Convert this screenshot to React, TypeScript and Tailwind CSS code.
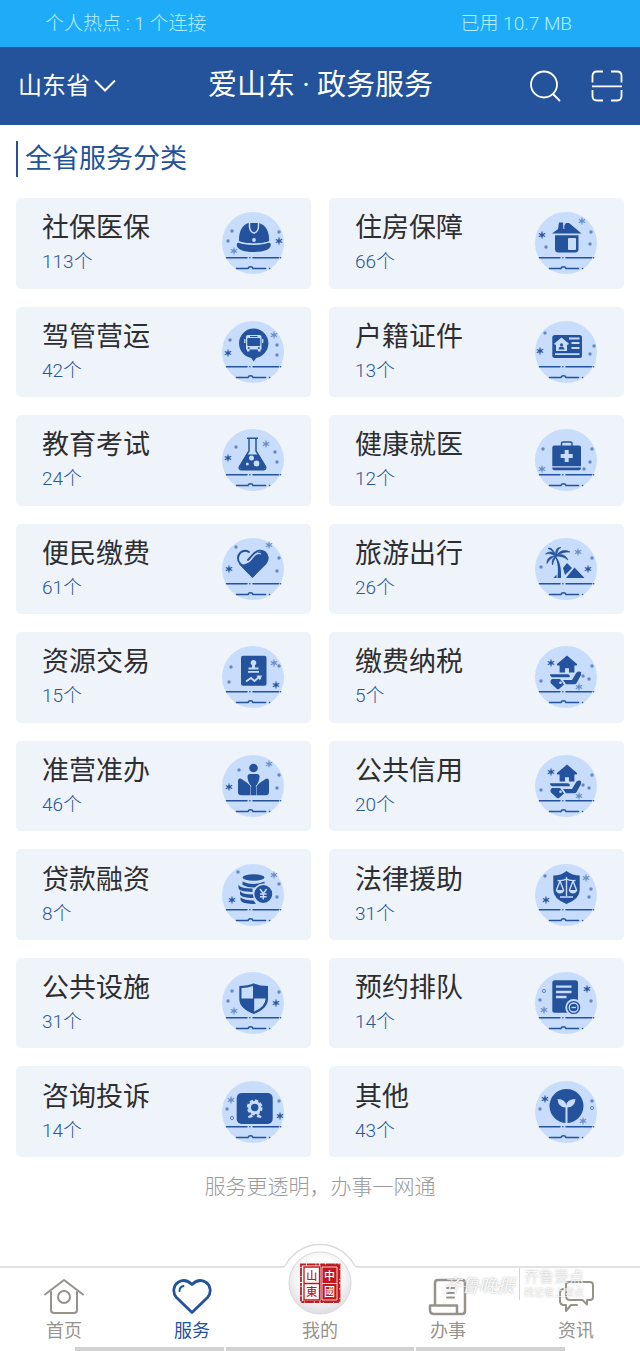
import React from "react";

const BLUE = "#24529c";
const PALE = "#c8ddfb";

// kind: s = dark star, l = light star, d = dot, o = ring
type Deco = [kind: "s" | "l" | "d" | "o", x: number, y: number];

type Service = {
  name: string;
  count: number;
  deco: Deco[];
  art: React.ReactNode;
};

const HandHouse = () => (
  <>
    <path d="M32 9.500 42 18q.6 1.600-1 1.600h-1.600v7H34v-4.400h-4v4.400h-5.400v-7H23q-1.600 0-1-1.600z" />
    <path d="M15 28.200h18q2.500 1 1.600 3H17q-2-.5-2-3z" />
    <path d="M17 33h8l4 5.500-5 4.500q-1 .6-2 0l-6-5.500q-1.500-2.500 1-4.500z" />
    <path d="M28 34h9l4.500-7.500q2.500-1.500 4.500-.5v3l-4.500 8.200q-.7 1-2 1H31z" />
    <circle cx="25.500" cy="36.800" r="1.300" fill={PALE} />
  </>
);

const services: Service[] = [
  {
    name: "社保医保",
    count: 113,
    deco: [["d", 10, 19], ["d", 6, 29], ["l", 12, 39], ["d", 57, 20], ["s", 57, 29]],
    art: (
      <>
        <path d="M17 29c-.5-10 4-17 10-18h10c7 2 10.500 9 10 18-5 3-25 3-30 0z" />
        <path d="M15 31.500c1-2 3 0 6 .6q11 2 21 0c3-.6 5-2.600 6.500-.6 1.500 5-4 8.500-16.500 8.500S13.500 36.500 15 31.500z" />
        <path d="M27.500 10.500v4c0 3 2 6.500 4.500 6.500s4.500-3.500 4.500-6.500v-4" fill="none" stroke={PALE} strokeWidth="1.500" />
        <circle cx="32" cy="28" r="1.900" fill={PALE} />
      </>
    ),
  },
  {
    name: "住房保障",
    count: 66,
    deco: [["s", 7, 23], ["l", 47, 9], ["d", 11, 35], ["d", 56, 20], ["d", 55, 32]],
    art: (
      <>
        <path d="M17 21.500 23 17l1-6.500h4.500v4l2.500-3.500h3L46.500 21.500z" />
        <path d="M20 23.200h23.500V37q0 3.500-3.500 3.500H23.500Q20 40.500 20 37z" />
        <rect x="33" y="26" width="8" height="12" rx="1" fill={PALE} />
        <path d="M28.800 10v7" stroke={PALE} />
      </>
    ),
  },
  {
    name: "驾管营运",
    count: 42,
    deco: [["s", 6, 32], ["l", 52, 14], ["d", 8, 19], ["d", 55, 24], ["d", 55, 34]],
    art: (
      <>
        <circle cx="31.700" cy="22.300" r="14.700" />
        <path d="M28.500 36h6.400l-3.200 4.500z" />
        <path d="M26 14h11.500q2 0 2 2v12.500h-1v2H36v-2h-8.500v2H25v-2h-1V16q0-2 2-2z" fill={PALE} />
        <path d="M22.800 18v4M40.700 18v4" stroke={PALE} strokeWidth="1.300" />
        <path d="M28 15.500h7.500M25.800 17.500h12v7h-12z" stroke={BLUE} />
        <circle cx="26.700" cy="27" r="1" />
        <circle cx="36.800" cy="27" r="1" />
      </>
    ),
  },
  {
    name: "户籍证件",
    count: 13,
    deco: [["s", 5, 30], ["d", 10, 12], ["d", 59, 25], ["d", 55, 33]],
    art: (
      <>
        <rect x="17.300" y="14" width="29.700" height="23" rx="2.500" />
        <path d="m26.500 16.500 7.500 6.200-1 1.100h-1V30H21v-6.200h-1L19 22.700z" fill={PALE} />
        <circle cx="26.500" cy="23.700" r="1.500" />
        <path d="M23.500 28.500q.3-3 3-3t3 3z" />
        <path d="M34 17.500h10.500M36.500 22h8M36.500 27h8M20 33.200h24.500" stroke={PALE} strokeWidth="1.800" />
      </>
    ),
  },
  {
    name: "教育考试",
    count: 24,
    deco: [["s", 6, 29], ["l", 44, 15], ["d", 14, 18], ["d", 53, 23], ["d", 55, 33]],
    art: (
      <>
        <path d="M25 9.200h11M27 9v13L17.500 37.500q-1 3.300 2.500 3.300h21q3.500 0 2.500-3.300L34 22V9" fill="none" stroke={BLUE} strokeWidth="1.500" />
        <path d="M24.500 25.500h12L43 37.500q.6 3-2.500 3h-20q-3 0-2.500-3z" />
        <circle cx="29.500" cy="29" r="2.500" fill={PALE} />
        <circle cx="34.500" cy="34.500" r="2.900" fill={PALE} />
        <circle cx="25.300" cy="35" r="1.500" fill={PALE} />
      </>
    ),
  },
  {
    name: "健康就医",
    count: 12,
    deco: [["l", 7, 40], ["d", 8, 20], ["d", 57, 20], ["d", 55, 33], ["d", 49, 40]],
    art: (
      <>
        <path d="M17.300 18.500q0-2 2-2H44q2 0 2 2v18.800H17.300zM17.300 38.500H46q0 2.800-2 2.800H19.300q-2 0-2-2.800z" />
        <path d="M26.500 17v-2.500q0-1.500 1.500-1.500h7.500q1.500 0 1.500 1.500V17" fill="none" stroke={BLUE} strokeWidth="1.500" />
        <path d="M31.700 21v12M25.700 27h12" stroke={PALE} strokeWidth="4" />
      </>
    ),
  },
  {
    name: "便民缴费",
    count: 61,
    deco: [["s", 7, 31], ["l", 47, 7], ["d", 14, 9], ["d", 57, 20], ["d", 55, 33]],
    art: (
      <>
        <path d="M30.500 40 17 26q7 2 12.500-4.500C33 17 36 13 39.500 13c5 .5 7.500 6 5 11z" />
        <path d="M27 14C24 12 21 12.500 18.500 14.500c-3 3-3.500 7.500-.5 11L30.500 38.500 43.500 25.500c3.500-4 2.500-8.500-.5-11.300-3.500-2.800-8-1.700-11 1.300l-6 6.500" fill="none" stroke={BLUE} strokeWidth="1.900" strokeLinecap="round" />
        <path d="M24.500 24.500c3 0 4.500-3 6.500-5.500 2.500-3 5-4.500 8-3" fill="none" stroke={PALE} strokeWidth="1.300" />
      </>
    ),
  },
  {
    name: "旅游出行",
    count: 26,
    deco: [["s", 53, 31], ["l", 43, 14], ["d", 6, 29], ["d", 57, 20]],
    art: (
      <>
        <path d="M21 18.500c4 5 5.500 12 5 21.500h-3.500c1-9 .5-15-2.500-21z" />
        <path d="M21 18.500C19 13 14 13 10.500 16c4-1 7 0 10.500 2.500zM21 18C18 10 14.500 9.500 13 10.500c4 1 5 4 8 7.500zM21 18c-1-6 1-9 5-8.500-3 1-3.500 4-5 8.500zM21 18c4-6 9-6.500 14-4-5-.5-9 1-14 4zM21 18c6-3 10-.5 12 4-3.500-3-7-4-12-4zM20.500 18c-6 0-9 3-8.500 7.500 2-3.500 4-5.500 8.500-7.500zM21 18.500c-3 1-4.500 4-3.500 8.500 1-4 2-6 3.500-8.500z" stroke={BLUE} strokeWidth=".7" />
        <path d="m31 40 8.500-10.500L49.500 40zM28 30l4-5 5 5-7 7zM18.500 40l3-3.500V40z" />
      </>
    ),
  },
  {
    name: "资源交易",
    count: 15,
    deco: [["s", 54, 39], ["l", 52, 17], ["d", 9, 21], ["d", 57, 20], ["d", 7, 36]],
    art: (
      <>
        <rect x="19" y="9.700" width="25.500" height="30" rx="2" />
        <path d="M29 18a2.800 2.800 0 1 1 5 0l-1 1.500v2h3.500v2h-10v-2H30v-2zM26 25h11v1.800H26z" fill={PALE} />
        <path d="m24 35.500 5-3.500 3.500 3 5-4.500" fill="none" stroke={PALE} strokeWidth="1.800" />
        <path d="M34.500 29.500H40l-2 5z" fill={PALE} />
      </>
    ),
  },
  {
    name: "缴费纳税",
    count: 5,
    deco: [["s", 16, 17], ["l", 44, 41], ["d", 6, 35], ["d", 57, 20], ["d", 54, 33], ["d", 48, 30]],
    art: <HandHouse />,
  },
  {
    name: "准营准办",
    count: 46,
    deco: [["s", 7, 32], ["l", 47, 9], ["d", 17, 15], ["d", 57, 20], ["d", 55, 33]],
    art: (
      <>
        <circle cx="31.500" cy="13" r="4.300" />
        <path d="M16 26.500q0-4 3.500-2.500l9 6v10.300h-9.200Q16 40.300 16 37zM47 26.500q0-4-3.500-2.500l-9 6v10.300h9.200Q47 40.300 47 37z" />
        <path d="M25.500 21.500q0-2.500 2.500-2.500h7q2.500 0 2.500 2.500 0 5-3.500 9.500v9.300h-5V31q-3.500-4.500-3.500-9.500z" />
        <path d="m25.500 27.500 3.500 3.800M37.500 27.500 34 31.300" fill="none" stroke={PALE} />
      </>
    ),
  },
  {
    name: "公共信用",
    count: 20,
    deco: [["s", 16, 17], ["l", 44, 41], ["d", 6, 35], ["d", 57, 20], ["d", 54, 33], ["d", 48, 30]],
    art: <HandHouse />,
  },
  {
    name: "贷款融资",
    count: 8,
    deco: [["s", 10, 36], ["l", 52, 11], ["d", 16, 8], ["d", 57, 20], ["d", 55, 33]],
    art: (
      <>
        <ellipse cx="31.500" cy="13.500" rx="11" ry="3.200" />
        <path d="M20.500 17.500q11 5 22 0v3.500q-11 5-22 0zM16.500 20.500q1 4 14 4v3.500q-15 0-14-5zM18 27q2 3.500 14 3.500V34q-14.500 0-14-4.500zM18.500 33.500q4 3 13 3l2.500 3.300q-15 .7-15.500-4z" />
        <circle cx="41.300" cy="30" r="9.700" stroke={PALE} strokeWidth="1.500" />
        <path d="m38 25 3.300 4.500 3.300-4.500M41.300 29.500v6M38 30h6.600M38 32.700h6.600" fill="none" stroke={PALE} strokeWidth="1.400" />
      </>
    ),
  },
  {
    name: "法律援助",
    count: 31,
    deco: [["s", 11, 36], ["l", 51, 14], ["d", 10, 12], ["d", 56, 25], ["d", 54, 33]],
    art: (
      <>
        <path d="M31.500 7q6 4.500 13.200 4.500V26q0 9-13.200 14Q18.300 35 18.300 26V11.500Q26 11.500 31.500 7z" />
        <path d="M31.500 13v19M25 33h13M22.500 16.500q6 .5 9-1.500 3 2 9 1.500M25 17l-3.500 9M25 17l3.500 9M38 17l-3.500 9M38 17l3.500 9" fill="none" stroke={PALE} strokeWidth="1.400" />
        <path d="M20.500 26h9q-1.500 3.500-4.500 3.500T20.500 26zM33.500 26h9q-1.500 3.500-4.500 3.500T33.500 26z" fill={PALE} />
      </>
    ),
  },
  {
    name: "公共设施",
    count: 31,
    deco: [["d", 10, 19], ["d", 6, 29], ["l", 12, 39], ["d", 57, 20], ["s", 54, 31]],
    art: (
      <>
        <path d="M31.700 11.300q6 2.700 14.300 2.700v13q0 9.500-14.300 15Q17.300 36.500 17.300 27V14q8.400 0 14.400-2.700z" />
        <path d="M31 14v12.500H19.500V16q6.500 0 11.500-2zM32.200 26.500h11.500Q43.500 34.500 32.200 39.500z" fill={PALE} />
      </>
    ),
  },
  {
    name: "预约排队",
    count: 14,
    deco: [["o", 9, 19], ["d", 5, 28], ["l", 9, 38], ["s", 52, 17], ["d", 56, 29]],
    art: (
      <>
        <rect x="17.300" y="8.300" width="25.700" height="32.500" rx="2.500" />
        <path d="M21 14.700h15.500M21 20h15.500M21 25h10.500" stroke={PALE} strokeWidth="2.300" />
        <circle cx="38.700" cy="35.500" r="7.500" stroke={PALE} strokeWidth="1.800" />
        <circle cx="38.700" cy="35.500" r="4.500" fill="none" stroke={PALE} strokeWidth="1.300" />
        <path d="M36.500 35.500h4.500" stroke={PALE} strokeWidth="1.300" />
      </>
    ),
  },
  {
    name: "咨询投诉",
    count: 14,
    deco: [["l", 9, 19], ["d", 5, 28], ["o", 10, 37], ["d", 57, 20], ["s", 58, 35]],
    art: (
      <>
        <rect x="14.700" y="12" width="36" height="31" rx="5" />
        <circle cx="32.700" cy="26.500" r="5.200" fill="none" stroke={PALE} strokeWidth="3" />
        <circle cx="32.700" cy="26.500" r="7" fill="none" stroke={PALE} strokeWidth="1.800" strokeDasharray="3.500 2" />
        <path d="m29.500 33 1.500 3-4 1q-2-1-.5-2zM36 33l-1.500 3 4 1q2-1 .5-2z" fill={PALE} />
      </>
    ),
  },
  {
    name: "其他",
    count: 43,
    deco: [["s", 10, 18], ["d", 5, 28], ["d", 57, 20], ["o", 57, 27], ["l", 48, 40]],
    art: (
      <>
        <circle cx="31.500" cy="25" r="17" />
        <path d="M31.500 25v17" stroke={PALE} strokeWidth="2" />
        <path d="M30.700 26.500q-7.500 0-8.200-8.500 8 0 8.700 6.500.7-6.500 9.300-6.500-.7 8.500-8.500 8.500z" fill={PALE} />
      </>
    ),
  },
];

const DecoMark = ({ kind, x, y }: { kind: Deco[0]; x: number; y: number }) => {
  if (kind === "d") return <circle cx={x} cy={y} r="1.700" opacity=".6" />;
  if (kind === "o") return <circle cx={x} cy={y} r="1.600" fill="none" stroke={BLUE} strokeWidth=".9" opacity=".7" />;
  return (
    <g transform={`translate(${x} ${y})`} opacity={kind === "s" ? 0.95 : 0.55}>
      <path d="M0-3.500V3.500M-3.200-1.500 3.200 1.500M-3.200 1.700 3.200-1.700" stroke={BLUE} strokeWidth="1.100" />
      <circle r="1.700" />
    </g>
  );
};

const ServiceIcon = ({ item }: { item: Service }) => (
  <svg viewBox="0 0 62 62" className="size-[62px] shrink-0" fill={BLUE} aria-hidden="true">
    <circle cx="31" cy="31" r="31" fill={PALE} />
    {item.deco.map(([kind, x, y], i) => (
      <DecoMark key={i} kind={kind} x={x} y={y} />
    ))}
    {item.art}
    <g fill="none" stroke={BLUE} strokeWidth="1.600" strokeLinecap="round">
      <path d="M4.500 45.800H25M27.800 45.800h.1M31 45.800h25.500M58.500 45.800h.1" />
      <path d="M14.500 56.500H26q.5-1.800 2.500-1.800t2.500 1.800h12.500M47.500 56.500h.1" />
    </g>
  </svg>
);

const ServiceCard = ({ item }: { item: Service }) => (
  <a href="#" className="flex items-center justify-between rounded-[5px] bg-[#eff4fb] pr-[27px] pl-[26px]">
    <div className="pt-0.5">
      <h3 className="text-[27px] leading-9 font-normal text-[#2e2e30]">{item.name}</h3>
      <p className="text-[19px] leading-8 text-[#2c5794]">{item.count}个</p>
    </div>
    <ServiceIcon item={item} />
  </a>
);

const Seal = () => (
  <svg viewBox="0 0 80 80" className="size-20" aria-hidden="true">
    <defs>
      <radialGradient id="sealShade" cx=".5" cy=".4" r=".6">
        <stop offset=".5" stopColor="#fff" />
        <stop offset="1" stopColor="#dedee2" />
      </radialGradient>
    </defs>
    <path d="M0 24h3.500Q5 24 6 21.500A39 39 0 0 1 74 21.500q1 2.500 2.500 2.500H80V80H0z" fill="#fff" />
    <path d="M0 24h3.500Q5 24 6 21.500A39 39 0 0 1 74 21.500q1 2.500 2.500 2.500H80" fill="none" stroke="#dcdcdc" strokeWidth="1.500" />
    <circle cx="40" cy="40" r="31" fill="url(#sealShade)" stroke="#d8d8d8" />
    <path d="M21 21.500h38.500V59H21z" fill="none" stroke="#b82024" strokeWidth="1.800" strokeDasharray="5 .7 9 .5 3 1" />
    <path d="M40.500 21.500h18.500V59H40.500z" fill="#c2181d" />
    <path d="M24 24h15.500V57H24zM24 40.500h15.500" fill="none" stroke="#c2181d" strokeWidth="1.300" />
    <path d="M42 24h15V57H42zM42 40.500h15" fill="none" stroke="#fff" strokeWidth=".8" />
    <g fontFamily="Noto Sans CJK TC, sans-serif" fontSize="11" fontWeight="500" textAnchor="middle">
      <text x="31.700" y="36.500" fill="#c2181d">山</text>
      <text x="31.700" y="53" fill="#c2181d">東</text>
      <text x="49.500" y="36.500" fill="#fff">中</text>
      <text x="49.500" y="53" fill="#fff">國</text>
    </g>
  </svg>
);

const tabs = [
  {
    label: "首页",
    icon: (
      <>
        <path d="M2 17.500 21 3l19 14.500" />
        <path d="M8 15v18q0 3 3 3h20q3 0 3-3V15" />
        <circle cx="21" cy="20" r="6" />
      </>
    ),
  },
  {
    label: "服务",
    active: true,
    icon: (
      <>
        <path d="M21 35.500 5.500 20.500C1 15.500 2.500 8 7.500 5c5-2.800 10-1 13.500 2.500C24.500 4 29.500 2.200 34.500 5c5 3 6.500 10.500 2 15.500z" strokeWidth="2.800" />
        <path d="M8.500 14q0-4 4-5" strokeWidth="2" />
      </>
    ),
  },
  { label: "我的", icon: null },
  {
    label: "办事",
    icon: (
      <>
        <path d="M8 28V6q0-3 3-3h24q3 0 3 3v28q0 3-3 3H7q-4 0-4-4v-4.500h27V37" strokeWidth="2.500" />
        <path d="M20 11h7M20 16h7M20 20.500h7" />
      </>
    ),
  },
  {
    label: "资讯",
    icon: (
      <>
        <path d="M14 5h21q3 0 3 3v12q0 3-3 3h-3v4.500L27.500 23H15q-4 0-4-4V8q0-3 3-3z" />
        <path d="M8 12q-3 1-3 4v8q0 4 4 4h2v6l5-6h6" />
      </>
    ),
  },
];

export default function App() {
  return (
    <div className="flex min-h-screen w-full flex-col bg-white font-['Roboto','Noto_Sans_CJK_SC',sans-serif] font-light">
      <div className="flex h-[47px] items-center justify-between bg-[#1eacf8] pt-0.5 pr-[68px] pl-[45px] text-[19px] text-[#b4f0ff]">
        <span>个人热点 : 1 个连接</span>
        <span>已用 10.7 MB</span>
      </div>

      <header className="grid h-[78px] grid-cols-[1fr_auto_1fr] items-center bg-[#24539b] pr-[17px] pl-[18px] text-white">
        <button className="flex items-center gap-1 text-2xl font-normal">
          山东省
          <svg viewBox="0 0 22 14" className="h-[14px] w-[22px]" fill="none" stroke="currentColor" strokeWidth="2" aria-hidden="true">
            <path d="m1 1.500 10 10 10-10" />
          </svg>
        </button>
        <h1 className="text-[29px] font-normal">爱山东 · 政务服务</h1>
        <div className="flex items-center justify-end gap-[30px]">
          <button aria-label="搜索">
            <svg viewBox="0 0 32 32" className="size-8" fill="none" stroke="currentColor" strokeWidth="1.800" strokeLinecap="round">
              <circle cx="15" cy="14.500" r="13" />
              <path d="m24.500 24.500 6 6" />
            </svg>
          </button>
          <button aria-label="扫一扫">
            <svg viewBox="0 0 32 32" className="size-8" fill="none" stroke="currentColor" strokeWidth="1.800">
              <path d="M1.500 12.500V6q0-4.500 4.500-4.500h6M20 1.500h6q4.500 0 4.500 4.500v6.500M1.500 20v6q0 4.500 4.500 4.500h6M20 30.500h6q4.500 0 4.500-4.500v-6M1 16.300h30" />
            </svg>
          </button>
        </div>
      </header>

      <main className="flex flex-1 flex-col px-4 pt-4">
        <h2 className="mb-[21px] h-9 border-l-2 border-[#24539b] pl-[7px] text-[27px] leading-9 font-normal text-[#24539b]">全省服务分类</h2>
        <div className="grid flex-1 auto-rows-fr grid-cols-2 gap-[18px]">
          {services.map((item) => (
            <ServiceCard key={item.name} item={item} />
          ))}
        </div>
        <p className="pt-[14px] pb-[63px] text-center text-[21px] leading-8 text-[#9a9a9a]">服务更透明，办事一网通</p>
      </main>

      <nav className="relative grid h-[85px] grid-cols-5 border-t-2 border-[#e2e2e2]">
        {tabs.map((tab) => (
          <a
            key={tab.label}
            href="#"
            className={`relative flex flex-col items-center justify-end gap-0.5 text-lg leading-6 ${tab.active ? "text-[#24539b]" : "text-[#96938c]"}`}
          >
            {tab.icon ? (
              <svg viewBox="0 0 42 40" className="h-10 w-[42px]" fill="none" stroke="currentColor" strokeWidth="2" strokeLinejoin="round" strokeLinecap="round" aria-hidden="true">
                {tab.icon}
              </svg>
            ) : (
              <span className="absolute -top-[25px]">
                <Seal />
              </span>
            )}
            <span className="relative mb-2 font-normal">{tab.label}</span>
          </a>
        ))}

        {/* 水印 */}
        <div className="pointer-events-none absolute top-0 right-[56px] flex items-center gap-1 text-white [text-shadow:0_0_2px_#999]">
          <span className="font-['Noto_Serif_CJK_SC','Noto_Sans_CJK_SC',serif] text-lg font-normal italic">齐鲁晚报</span>
          <span className="h-8 w-px bg-[#d6d6d6]" />
          <span className="flex flex-col">
            <span className="text-[15px] leading-[18px]">齐鲁壹点</span>
            <span className="text-[10px] leading-[14px]">找记者上壹点</span>
          </span>
        </div>

        <div className="absolute inset-x-[75px] bottom-0 grid h-1 grid-cols-[149fr_189fr_149fr] gap-[2px]">
          <span className="bg-[#d2d2d2]" />
          <span className="bg-[#d2d2d2]" />
          <span className="bg-[#d2d2d2]" />
        </div>
      </nav>
    </div>
  );
}
